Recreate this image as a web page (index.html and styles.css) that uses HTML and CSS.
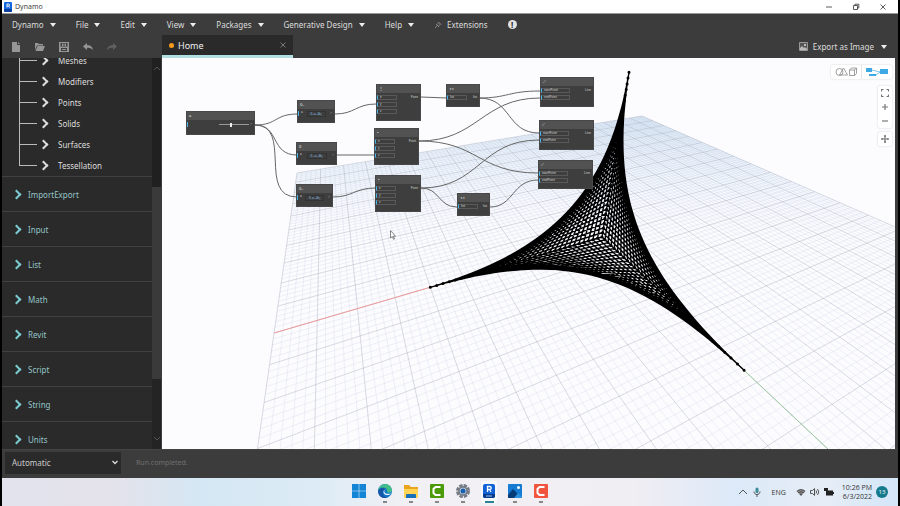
FILE: index.html
```html
<!DOCTYPE html>
<html lang="en">
<head>
    <meta charset="UTF-8">
    <meta name="viewport" content="width=device-width, initial-scale=1.0">
    <title>Dynamo</title>
    <link rel="stylesheet" href="styles.css">
</head>
<body>
    <div class="window">
        <header class="titlebar">
            <svg class="app-icon" viewBox="0 0 8 10"><rect width="8" height="10" rx="1" fill="#1467dd"/><rect y="7" width="8" height="3" rx="1" fill="#0b3f9b"/><path d="M3 5.500V2h1.500a1 1 0 0 1 0 2H3m1.500 0 1 1.500" fill="none" stroke="#fff" stroke-width=".9"/></svg>
            <span class="app-name">Dynamo</span>
            <div class="window-buttons">
                <button aria-label="Minimize"><svg viewBox="0 0 8 8"><path d="M1 4h6"/></svg></button>
                <button aria-label="Restore"><svg viewBox="0 0 8 8"><path d="M1.500 2.500h4v4h-4zM3 2.500V1.200h3.800v3.800H5.500"/></svg></button>
                <button aria-label="Close"><svg viewBox="0 0 8 8"><path d="M1.500 1.500l5 5M6.500 1.500l-5 5"/></svg></button>
            </div>
        </header>

        <nav class="menubar">
            <button class="caret">Dynamo</button>
            <button class="caret">File</button>
            <button class="caret">Edit</button>
            <button class="caret">View</button>
            <button class="caret">Packages</button>
            <button class="caret">Generative Design</button>
            <button class="caret">Help</button>
            <button class="extensions"><svg viewBox="0 0 8 8"><path d="M1 7l2-2M2 3l3 3M3 3.500 5 1.500M4.500 5l2-2M4.500 1l2.500 2.500" fill="none" stroke="#999" stroke-width=".8"/></svg>Extensions</button>
            <button class="alert" aria-label="Notifications">!</button>
        </nav>

        <div class="toolbar">
            <div class="file-buttons">
                <button aria-label="New"><svg viewBox="0 0 10 10"><path d="M1 0h5v3h3v7H1zM7 0l2 2H7z"/></svg></button>
                <button aria-label="Open"><svg viewBox="0 0 10 10"><path d="M0 1h3l1 1h4v1.500H2L0 8zM2.500 4H10L8 9H.5z"/></svg></button>
                <button aria-label="Save"><svg viewBox="0 0 10 10"><path fill-rule="evenodd" d="M0 0h10v10H0zM1.500 1v3.500h7V1zM2 6v3h6V6zM3 1.500h1.500V4H3zM5.500 1.500H7V4H5.500zM3 7h4v1H3z"/></svg></button>
                <button aria-label="Undo"><svg viewBox="0 0 10 10"><path d="M0 4.500 4 1v2.200c4 0 5.500 1.500 6 5C8.500 6.300 7 5.800 4 5.800V8z"/></svg></button>
                <button aria-label="Redo" class="faded"><svg viewBox="0 0 10 10"><path d="M10 4.500 6 1v2.200c-4 0-5.500 1.500-6 5 1.500-1.900 3-2.400 6-2.400V8z"/></svg></button>
            </div>
            <div class="tab"><span class="dot"></span><span>Home</span><button aria-label="Close tab"><svg viewBox="0 0 6 6"><path d="M.5.5l5 5M5.500.5l-5 5" stroke="#777" fill="none"/></svg></button></div>
            <button class="export caret"><svg viewBox="0 0 9 9"><path d="M.5.5h8v8h-8z" fill="#555" stroke="#999"/><path d="M1 6l2-2 2 2 1-1 2 2v1H1zM5 2h2v2H5z" fill="#bbb"/></svg>Export as Image</button>
        </div>

        <main class="content">
            <aside class="library">
                <div class="library-list">
                    <ul class="tree">
                        <li><button>Meshes</button></li>
                        <li><button>Modifiers</button></li>
                        <li><button>Points</button></li>
                        <li><button>Solids</button></li>
                        <li><button>Surfaces</button></li>
                        <li><button>Tessellation</button></li>
                    </ul>
                    <button class="category">ImportExport</button>
                    <button class="category">Input</button>
                    <button class="category">List</button>
                    <button class="category">Math</button>
                    <button class="category">Revit</button>
                    <button class="category">Script</button>
                    <button class="category">String</button>
                    <button class="category">Units</button>
                </div>
                <div class="scrollbar">
                    <svg viewBox="0 0 8 6"><path d="M1 5l3-3 3 3"/></svg>
                    <svg viewBox="0 0 8 6"><path d="M1 1l3 3 3-3"/></svg>
                </div>
            </aside>

            <section class="workspace" id="workspace">
                <svg class="scene" viewBox="162 58 733 391" preserveAspectRatio="xMinYMin slice">
                    <defs>
                        <linearGradient id="haze" x1="0" y1="0" x2="0" y2="1">
                            <stop offset="0" stop-color="#e2eef9"/>
                            <stop offset=".2" stop-color="#f0f5fc" stop-opacity=".7"/>
                            <stop offset=".4" stop-color="#fcfbfe" stop-opacity="0"/>
                        </linearGradient>
                    </defs>
                    <path d="M297 173L642 116L895 226V449H257z" fill="url(#haze)"/>
                    <path id="minor" class="minor"/>
                    <path id="major" class="major"/>
                    <path id="axis-x" class="axis-x"/>
                    <path id="axis-y" class="axis-y"/>
                    <path id="mesh" class="mesh"/>
                    <path id="points" class="points"/>
                    <g class="wires">
                        <path d="M255 125C278 125 274 114 298 114"/>
                        <path d="M255 125C280 125 270 155 297 155"/>
                        <path d="M255 125C293 125 257 197 297 197"/>
                        <path d="M335 114C355 114 356 104 376 104"/>
                        <path d="M337 155H374"/>
                        <path d="M333 197C353 197 354 188 376 188"/>
                        <path d="M421 97L447 98"/>
                        <path d="M479 98C508 98 508 91 540 91"/>
                        <path d="M479 98C512 98 506 133 539 133"/>
                        <path d="M419 141C478 141 482 98 540 98"/>
                        <path d="M419 141C478 141 478 173 538 173"/>
                        <path d="M421 188C480 188 480 140 539 140"/>
                        <path d="M421 188C440 188 438 207 457 207"/>
                        <path d="M490 207C514 207 512 180 538 180"/>
                    </g>
                </svg>

                <svg class="cursor" viewBox="0 0 6 10"><path d="M.5.5v7.500l1.800-1.500 1.200 2.800 1-.5-1.200-2.600h2.200z" fill="#fff" stroke="#555" stroke-width=".7"/></svg>

                <div class="view-switch">
                    <button aria-label="3D preview"><svg viewBox="0 0 22 10"><path d="M8 5a3.500 3.500 0 1 1-7 0 3.500 3.500 0 0 1 7 0zM4.500 8 8.500 1l4 7zM14.500 3h5v5.500h-5zM14.500 3l2-2h5v5.500l-2 2M19.500 3l2-2" fill="none" stroke="#888" stroke-width=".8"/></svg></button>
                    <button aria-label="Graph view"><svg viewBox="0 0 22 10"><path d="M0 1h6v4H0zM14 2h8v5h-8zM3 7h7v2H3z" fill="#3fa9e5"/><path d="M6 3l8 2M10 8l4-3" fill="none" stroke="#3fa9e5" stroke-width=".7"/></svg></button>
                </div>
                <div class="zoom-tools">
                    <button aria-label="Zoom to fit"><svg viewBox="0 0 8 8"><path d="M.5 2.500v-2h2M5.500.5h2v2M7.500 5.500v2h-2M2.500 7.500h-2v-2"/></svg></button>
                    <button aria-label="Zoom in"><svg viewBox="0 0 8 8"><path d="M4 1v6M1 4h6"/></svg></button>
                    <button aria-label="Zoom out"><svg viewBox="0 0 8 8"><path d="M1 4h6"/></svg></button>
                </div>
                <div class="pan-tool">
                    <button aria-label="Pan"><svg viewBox="0 0 8 8"><path d="M4 0v8M0 4h8M3 1.200h2M3 6.800h2M1.200 3v2M6.800 3v2"/></svg></button>
                </div>
            </section>
        </main>

        <footer class="runbar">
            <select aria-label="Run mode"><option>Automatic</option><option>Manual</option></select>
            <span>Run completed.</span>
        </footer>

        <div class="taskbar">
            <div class="apps">
                <button aria-label="Start"><svg viewBox="0 0 16 16"><path d="M1 1h6.700v6.700H1zM8.300 1H15v6.700H8.300zM1 8.300h6.700V15H1zM8.300 8.300H15V15H8.300z" fill="#1285d6"/></svg></button>
                <button aria-label="Edge" class="open"><svg viewBox="0 0 16 16"><circle cx="8" cy="8" r="7" fill="#1679c9"/><path d="M1.300 7C2.500-.5 14-1 15 7c0 3-4.500 3.500-5 1.500C11 4 4 3 1.300 7z" fill="#42bf86"/><path d="M1.300 7C5 3.500 8 5 8 6.500 4 8 6 14 11 14 6 17 .5 13 1.300 7z" fill="#1457a8"/><path d="M8 6.500c-2 2 0 5.500 6 4-2 2.500-7 2-7.500-1C6.400 8 7 7 8 6.500z" fill="#dcf2fa"/></svg></button>
                <button aria-label="File Explorer" class="open"><svg viewBox="0 0 16 16"><path d="M1 2h5l2 2h7v11H1z" fill="#e8a51d"/><path d="M1 6h14v9H1z" fill="#ffd353"/><path d="M4 11h8a1 1 0 0 1 1 1v3H3v-3a1 1 0 0 1 1-1z" fill="#1671b8"/></svg></button>
                <button aria-label="Camtasia" class="open"><svg viewBox="0 0 16 16"><rect x="1" y="1" width="14" height="14" rx="1" fill="#4b9a09"/><path d="M11.500 4h-5L4.500 6v4l2 2h5" fill="none" stroke="#fff" stroke-width="2"/></svg></button>
                <button aria-label="Settings" class="open"><svg viewBox="0 0 16 16"><circle cx="8" cy="8" r="5.800" fill="none" stroke="#727983" stroke-width="2.400" stroke-dasharray="3.400 1.150"/><circle cx="8" cy="8" r="5" fill="#737b86"/><circle cx="8" cy="8" r="3.200" fill="#c9d3de"/><circle cx="8" cy="8" r="2.500" fill="#155fae"/></svg></button>
                <button aria-label="Revit" class="open active"><svg viewBox="0 0 16 16"><rect x="2" y="1" width="12" height="14" rx="2" fill="#1262d5"/><path d="M2 11h12v2a2 2 0 0 1-2 2H4a2 2 0 0 1-2-2z" fill="#073a8a"/><path d="M6.500 9V3.500h2.200a1.500 1.500 0 0 1 0 3H6.500M8.500 6.500 10 9" fill="none" stroke="#fff" stroke-width="1.300"/><path d="M5 13h6" stroke="#9fc5f5"/></svg></button>
                <button aria-label="Photos" class="open"><svg viewBox="0 0 16 16"><rect x="1" y="1" width="14" height="14" rx="1" fill="#167bd2"/><path d="M1 12l5-6 9 9H2a1 1 0 0 1-1-1z" fill="#083c77"/><path d="M7 15l4-5 4 4v1z" fill="#2e91df"/><circle cx="11.500" cy="4.500" r="1.500" fill="#fff"/></svg></button>
                <button aria-label="Recorder" class="open"><svg viewBox="0 0 16 16"><rect x="1" y="1" width="14" height="14" rx="1" fill="#f2553d"/><path d="M11.500 4h-5L4.500 6v4l2 2h5" fill="none" stroke="#fff" stroke-width="2"/></svg></button>
            </div>
            <div class="tray">
                <svg viewBox="0 0 10 10"><path d="M1 7l4-4 4 4"/></svg>
                <svg viewBox="0 0 10 10"><rect x="3.500" y=".5" width="3" height="5.500" rx="1.500" fill="#3a8a98" stroke="none"/><path d="M2 4.500c0 4 6 4 6 0M5 7.500V10"/></svg>
                <span class="lang">ENG</span>
                <svg viewBox="0 0 10 10"><path d="M.5 4Q5 0 9.500 4L5 9z" fill="#555" stroke="none"/><path d="M1.500 5Q5 2 8.500 5M3 6.600q2-1.400 4 0" stroke="#bbb" stroke-width=".6"/></svg>
                <svg viewBox="0 0 10 10"><path d="M.5 3.500h2l2-2v7l-2-2h-2zM6 3.500q1.200 1.500 0 3M7.500 2q2.500 3 0 6"/></svg>
                <svg viewBox="0 0 10 10"><path d="M2 3.500h7v5H2zM9 5h1v2H9zM0 1h4v3H0z" fill="#222" stroke="none"/></svg>
                <div class="clock"><span>10:26 PM</span><span>6/3/2022</span></div>
                <span class="badge">13</span>
            </div>
        </div>
    </div>
    <script src="script.js"></script>
</body>
</html>
```
FILE: styles.css
```css
* {
    box-sizing: border-box;
}

body {
    margin: 0;
    background: #000;
    font-family: "Noto Sans", "Open Sans", sans-serif;
    font-size: 9px;
    color: #ddd;
}

button {
    padding: 0;
    border: none;
    background: none;
    font: inherit;
    color: inherit;
    cursor: pointer;
}

svg {
    display: block;
}

.window {
    display: flex;
    flex-direction: column;
    height: 100vh;
    padding: 0 2px;
}

/* title bar */
.titlebar {
    display: flex;
    align-items: center;
    height: 14px;
    padding: 0 11px 0 2px;
    background: #fff;
    color: #444;
    border-bottom: 1px solid #999;
}

.app-icon {
    width: 8px;
    height: 10px;
}

.app-name {
    flex: 1;
    margin-left: 3px;
    font-size: 7px;
}

.window-buttons {
    display: flex;
    gap: 19px;
}

.window-buttons svg {
    width: 8px;
    height: 8px;
    fill: none;
    stroke: #333;
    stroke-width: 0.8;
}

/* menus */
.menubar {
    display: flex;
    align-items: center;
    gap: 20px;
    height: 21px;
    padding-left: 10px;
    background: #3c3c3c;
    font-size: 8px;
}

.caret::after {
    content: "";
    display: inline-block;
    margin-left: 6px;
    border: 3px solid transparent;
    border-top: 4px solid #eee;
    border-bottom: 0;
    vertical-align: 1px;
}

.extensions {
    display: flex;
    align-items: center;
    gap: 5px;
}

.extensions svg {
    width: 8px;
    height: 8px;
}

.alert {
    width: 9px;
    height: 9px;
    border-radius: 50%;
    background: #e2e2e2;
    color: #222;
    font-weight: bold;
    line-height: 9px;
}

.toolbar {
    display: flex;
    height: 23px;
    background: #3c3c3c;
}

.file-buttons {
    display: flex;
    align-items: center;
    gap: 14px;
    width: 160px;
    padding-left: 9px;
}

.file-buttons svg {
    width: 10px;
    height: 10px;
    fill: #969696;
}

.faded {
    opacity: 0.4;
}

.tab {
    display: flex;
    align-items: center;
    gap: 4px;
    width: 131px;
    padding: 0 7px;
    background: #2a2a2a;
    border-bottom: 3px solid #b2dfe2;
    font-size: 9px;
    color: #eee;
}

.dot {
    width: 5px;
    height: 5px;
    border-radius: 50%;
    background: #f79a1c;
}

.tab button {
    margin-left: auto;
}

.tab svg {
    width: 6px;
    height: 6px;
}

.export {
    display: flex;
    align-items: center;
    gap: 5px;
    margin-left: auto;
    padding-right: 11px;
    font-size: 8px;
}

.export svg {
    width: 9px;
    height: 9px;
}

.export::after {
    margin-left: 2px;
}

/* library on the left */
.content {
    display: flex;
    flex: 1;
    min-height: 0;
    padding-right: 3px;
    background: #3c3c3c;
}

.library {
    display: flex;
    width: 160px;
    padding-right: 1px;
    background: #3c3c3c;
}

.library-list {
    flex: 1;
    overflow: hidden;
    background: #2a2a2a;
}

.tree {
    margin: -8px 0 0 17px;
    padding: 0;
    list-style: none;
}

.tree li {
    display: flex;
    align-items: center;
    height: 21px;
    background: linear-gradient(#bbb, #bbb) 0 50% / 17px 1px no-repeat;
    border-left: 1px solid #bbb;
}

.tree li:last-child {
    border-image: linear-gradient(#bbb 50%, transparent 50%) 1;
}

.tree button,
.category {
    display: flex;
    align-items: center;
    font-size: 8px;
}

.tree button::before,
.category::before {
    content: "";
    width: 5px;
    height: 5px;
    border: solid #ddd;
    border-width: 2px 2px 0 0;
    transform: rotate(45deg);
}

.tree button::before {
    margin: 0 11px 0 21px;
}

.category {
    width: 100%;
    height: 35px;
    padding-left: 12px;
    border-top: 1px solid #414141;
    color: #94c4c8;
}

.category::before {
    margin-right: 8px;
    border-color: #7ccbd0;
}

.tree button::before,
.category::before {
    margin-left: -1px;
}

.tree button::before {
    margin-left: 20px;
}

.scrollbar {
    display: flex;
    flex-direction: column;
    justify-content: space-between;
    align-items: center;
    width: 9px;
    padding: 7px 0;
    background: linear-gradient(#202020 33%, #3a3a3a 33%, #3a3a3a 82%, #242424 82%);
}

.scrollbar svg {
    width: 8px;
    height: 6px;
    fill: none;
    stroke: #555;
}

/* workspace */
.workspace {
    position: relative;
    flex: 1;
    overflow: hidden;
    background: #fcfbfe;
}

.scene {
    width: 100%;
    height: 100%;
}

.minor,
.major,
.axis-x,
.axis-y,
.mesh,
.wires {
    fill: none;
}

.minor {
    stroke: rgba(150, 170, 205, 0.24);
    stroke-width: 0.6;
}

.major {
    stroke: rgba(130, 140, 160, 0.5);
    stroke-width: 0.6;
}

.axis-x {
    stroke: #ee9a9a;
}

.axis-y {
    stroke: #9cc8a0;
}

.mesh {
    stroke: #000;
    stroke-width: 1.4;
}

.points {
    stroke: #000;
    stroke-width: 3;
    stroke-linecap: round;
}

.wires {
    stroke: #666;
    stroke-width: 1;
}

.node {
    position: absolute;
    display: flex;
    flex-direction: column;
    background: #3e3e3e;
    border: 1px solid #484848;
    color: #ddd;
    font-size: 3px;
    line-height: 5px;
}

.node-title {
    height: 8px;
    padding: 1px 2px;
    background: #525252;
    color: #eee;
    font-size: 4px;
}

.node-body {
    display: flex;
    flex: 1;
    justify-content: space-between;
    align-items: flex-start;
    padding: 2px 1px 0 0;
}

.inputs {
    display: flex;
    flex-direction: column;
    gap: 2px;
}

.port {
    width: 20px;
    height: 5px;
    padding-left: 2px;
    border: 1px solid #595959;
    border-left: 1px solid #4ab6ee;
    line-height: 3px;
}

.port.wide {
    width: 29px;
}

.port.short {
    width: 5px;
    border-width: 0 0 0 1px;
}

.code {
    height: 6px;
    padding: 0 3px;
    border: 1px solid #333;
    color: #8cc4ea;
    line-height: 4px;
}

.output {
    padding: 0 1px;
}

.node input {
    width: 30px;
    height: 5px;
    margin: 0 0 0 26px;
    appearance: none;
    background: linear-gradient(#999, #999) 0 50% / 100% 1px no-repeat;
}

.node input::-webkit-slider-thumb {
    appearance: none;
    width: 2px;
    height: 4px;
    background: #eee;
}

.cursor {
    position: absolute;
    left: 228px;
    top: 172px;
    width: 6px;
    height: 10px;
}

.view-switch,
.zoom-tools,
.pan-tool {
    position: absolute;
    right: 3px;
    display: flex;
    background: #fff;
    border-radius: 2px;
    box-shadow: 0 0 2px #ccc;
}

.view-switch {
    top: 7px;
    height: 14px;
}

.view-switch button {
    padding: 0 4px;
}

.view-switch button + button {
    border-left: 1px solid #e5e5e5;
}

.view-switch svg {
    width: 22px;
    height: 10px;
}

.zoom-tools {
    top: 28px;
    flex-direction: column;
}

.pan-tool {
    top: 74px;
}

.zoom-tools button,
.pan-tool button {
    padding: 3px;
}

.zoom-tools svg,
.pan-tool svg {
    width: 8px;
    height: 8px;
    fill: none;
    stroke: #777;
    stroke-width: 1.2;
}

/* run bar */
.runbar {
    display: flex;
    align-items: center;
    gap: 15px;
    height: 29px;
    padding: 0 3px 3px;
    background: #3c3c3c;
    border-top: 1px solid #444;
    color: #707070;
    font-size: 7px;
}

.runbar select {
    width: 116px;
    height: 22px;
    padding: 0 7px;
    appearance: none;
    border: none;
    border-radius: 0;
    background: #2a2a2a url("data:image/svg+xml,%3Csvg xmlns='http://www.w3.org/2000/svg' width='6' height='5'%3E%3Cpath d='M.5 1L3 3.500 5.500 1' fill='none' stroke='%23ddd' stroke-width='1.300'/%3E%3C/svg%3E") right 3px center no-repeat;
    color: #ccc;
    font: 8px "Noto Sans", sans-serif;
}

/* taskbar */
.taskbar {
    display: grid;
    grid-template-columns: 1fr auto 1fr;
    align-items: center;
    height: 28px;
    background: linear-gradient(90deg, #e2e3ed, #e4e2ea 12%, #d5e7f4 22%, #dcebf5 35%, #f1f0f4 45%, #f1eef3 70%, #dce9f8 82%, #e6edf6 92%, #d3e6f8);
    color: #333;
}

.apps {
    grid-column: 2;
    display: flex;
    gap: 10px;
}

.apps button {
    padding: 2px 0 4px;
    border-radius: 2px;
}

.apps svg {
    width: 16px;
    height: 16px;
}

.apps .open {
    background: linear-gradient(#888, #888) 50% 100% / 4px 2px no-repeat;
}

.apps .active {
    background: linear-gradient(#2b8294, #2b8294) 50% 100% / 9px 2px no-repeat, #f8f9fb;
}

.tray {
    display: flex;
    justify-content: flex-end;
    align-items: center;
    gap: 4px;
    padding-right: 10px;
    font: 7px "Open Sans", sans-serif;
}

.tray svg {
    width: 10px;
    height: 10px;
    fill: none;
    stroke: #555;
}

.lang {
    margin: 0 6px;
}

.clock {
    display: flex;
    flex-direction: column;
    align-items: flex-end;
    margin-left: 4px;
    line-height: 9px;
}

.badge {
    width: 12px;
    height: 12px;
    border-radius: 50%;
    background: #157a8c;
    color: #fff;
    font-size: 6px;
    line-height: 12px;
    text-align: center;
}
```
FILE: script.js
```js
// perspective camera, ground units run from -1 to 1
function project(x, y, z) {
    const w = 1 - 0.2677 * x - 0.598 * y - 0.2 * z;
    return [
        (602 - 401.3 * x - 194.4 * y - 80.8 * z) / w,
        (237 + 6.86 * x + 13.7 * y - 289 * z) / w
    ];
}

function line(a, b) {
    const p = project(...a);
    const q = project(...b);
    return `M${p[0].toFixed(1)} ${p[1].toFixed(1)}L${q[0].toFixed(1)} ${q[1].toFixed(1)}`;
}

function draw(id, d) {
    document.getElementById(id).setAttribute('d', d);
}

// ground grid
let minor = '';
let major = '';
for (let i = -50; i <= 50; i++) {
    const t = i / 50;
    const pair = line([t, -1, 0], [t, 1, 0]) + line([-1, t, 0], [1, t, 0]);
    if (i % 5 === 0) {
        major += pair;
    } else {
        minor += pair;
    }
}
draw('minor', minor);
draw('major', major);
draw('axis-x', line([0, 0, 0], [1, 0, 0]));
draw('axis-y', line([0, 0, 0], [0, 1, 0]));

// lines between points on each pair of axes
const steps = 32;
const onX = t => [0.6 * t, 0, 0];
const onY = t => [0, 0.567 * t, 0];
const onZ = t => [0, 0, 0.6 * t];
let mesh = '';
let points = '';
for (let i = 0; i <= steps; i++) {
    const t = i / steps;
    mesh += line(onX(t), onY(1 - t)) + line(onY(t), onZ(1 - t)) + line(onZ(t), onX(1 - t));
    [onX, onY, onZ].forEach(axis => {
        points += line(axis(t), axis(t));
    });
}
draw('mesh', mesh);
draw('points', points);

// graph nodes
const nodes = [
    { type: 'slider', title: 'a', x: 24, y: 53, w: 69, h: 24 },
    { type: 'code', title: '0..', x: 135, y: 42, w: 38, h: 23, code: '0..a..#b;' },
    { type: 'code', title: '0', x: 134, y: 84, w: 41, h: 23, code: '0..-a..#b;' },
    { type: 'code', title: '0..', x: 134, y: 126, w: 37, h: 23, code: '0..a..#b;' },
    { type: 'node', title: '⋮', x: 214, y: 26, w: 45, h: 37, inputs: ['x', 'y', 'z'], output: 'Point' },
    { type: 'node', title: '•', x: 212, y: 70, w: 45, h: 37, inputs: ['x', 'y', 'z'], output: 'Point' },
    { type: 'node', title: '•', x: 213, y: 117, w: 46, h: 37, inputs: ['x', 'y', 'z'], output: 'Point' },
    { type: 'node', title: '◖◗', x: 284, y: 26, w: 34, h: 23, inputs: ['list'], output: 'list' },
    { type: 'node', title: '◖◗', x: 295, y: 135, w: 33, h: 23, inputs: ['list'], output: 'list' },
    { type: 'node', title: '⟋', x: 378, y: 19, w: 54, h: 30, inputs: ['startPoint', 'endPoint'], output: 'Line', wide: true },
    { type: 'node', title: '⟋', x: 377, y: 62, w: 55, h: 30, inputs: ['startPoint', 'endPoint'], output: 'Line', wide: true },
    { type: 'node', title: '⟋', x: 376, y: 102, w: 55, h: 29, inputs: ['startPoint', 'endPoint'], output: 'Line', wide: true }
];

function nodeBody(node) {
    if (node.type === 'slider') {
        return '<div class="port short"></div><input type="range" value="40" aria-label="Number"><span class="output">&gt;</span>';
    }
    if (node.type === 'code') {
        return `<div class="port short">a</div><span class="code">${node.code}</span><span class="output">&gt;</span>`;
    }
    const size = node.wide ? 'port wide' : 'port';
    const ports = node.inputs.map(name => `<div class="${size}">${name}</div>`).join('');
    return `<div class="inputs">${ports}</div><span class="output">${node.output}</span>`;
}

nodes.forEach(node => {
    const el = document.createElement('div');
    el.className = 'node';
    el.style.cssText = `left:${node.x}px;top:${node.y}px;width:${node.w}px;height:${node.h}px`;
    el.innerHTML = `<div class="node-title">${node.title}</div><div class="node-body">${nodeBody(node)}</div>`;
    document.getElementById('workspace').appendChild(el);
});
```
